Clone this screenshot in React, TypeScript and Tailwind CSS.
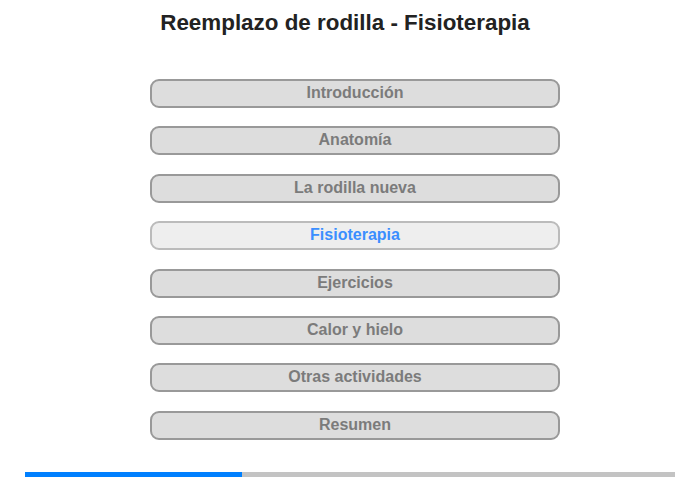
import React from "react";

const items = [
  "Introducción",
  "Anatomía",
  "La rodilla nueva",
  "Fisioterapia",
  "Ejercicios",
  "Calor y hielo",
  "Otras actividades",
  "Resumen",
];

export default function App() {
  return (
    <div
      className="w-[700px] h-[480px] bg-white flex flex-col"
      style={{ fontFamily: '"Liberation Sans", Arial, sans-serif' }}
    >
      <div className="pt-[10px] w-[690px] text-center text-[22.4px] leading-[25px] font-bold text-[#222222]">
        Reemplazo de rodilla - Fisioterapia
      </div>
      <div className="mt-[44px] ml-[150px] w-[410px] flex flex-col gap-[18.4px]">
        {items.map((t) =>
          t === "Fisioterapia" ? (
            <div
              key={t}
              className="h-[29px] rounded-[9px] border-2 border-[#bbbbbb] bg-[#eeeeee] flex items-center justify-center text-[16px] font-bold text-[#3b8eff] pb-[1px]"
            >
              {t}
            </div>
          ) : (
            <div
              key={t}
              className="h-[29px] rounded-[9px] border-2 border-[#999999] bg-[#dddddd] flex items-center justify-center text-[16px] font-bold text-[#7b7b7b] pb-[1px]"
            >
              {t}
            </div>
          )
        )}
      </div>
      <div className="mt-[32px] ml-[25px] w-[650px] h-[5px] bg-[#c3c3c3] flex">
        <div className="w-[217px] h-full bg-[#0080ff]" />
      </div>
    </div>
  );
}
